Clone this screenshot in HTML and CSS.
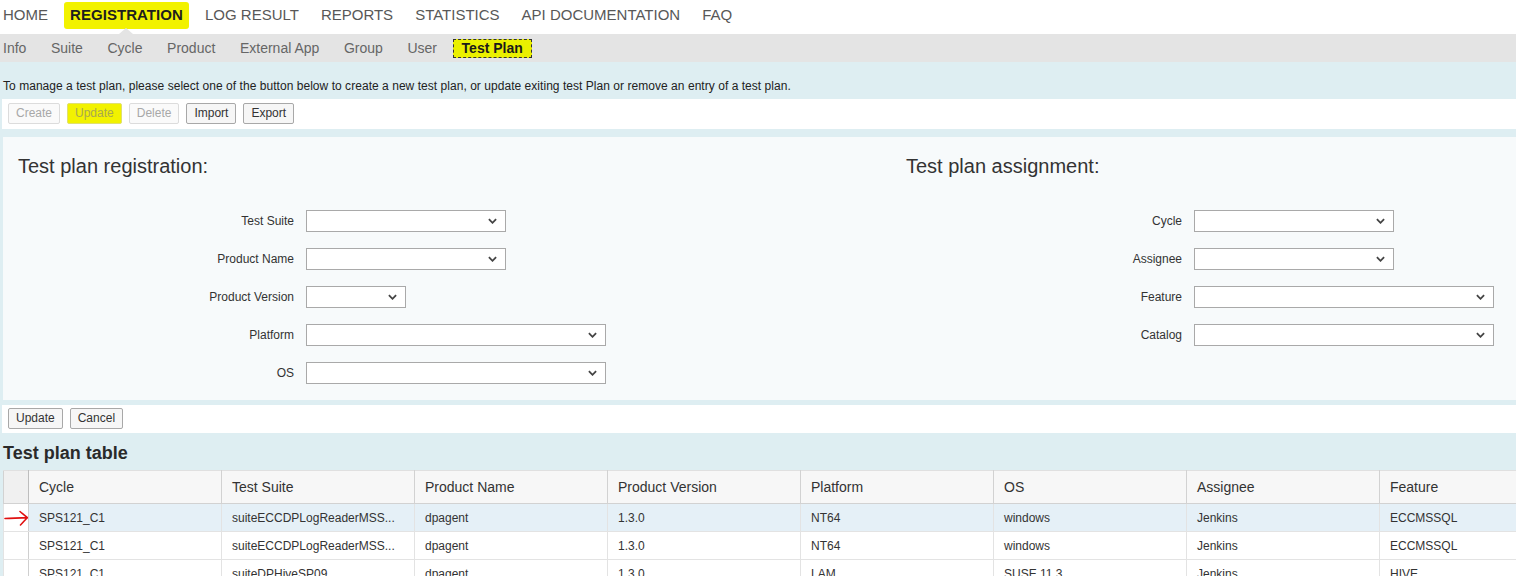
FILE: index.html
```html
<!DOCTYPE html>
<html>
<head>
<meta charset="utf-8">
<link rel="stylesheet" href="styles.css">
</head>
<body>
<nav class="topnav">
  <a class="tn">HOME</a>
  <a class="tn active"><span class="hl">REGISTRATION</span></a>
  <a class="tn">LOG RESULT</a>
  <a class="tn">REPORTS</a>
  <a class="tn">STATISTICS</a>
  <a class="tn">API DOCUMENTATION</a>
  <a class="tn">FAQ</a>
</nav>
<nav class="subnav">
  <a class="sn">Info</a>
  <a class="sn">Suite</a>
  <a class="sn">Cycle</a>
  <a class="sn">Product</a>
  <a class="sn">External App</a>
  <a class="sn">Group</a>
  <a class="sn">User</a>
  <a class="sn current">Test Plan</a>
</nav>
<main class="content">
  <p class="msg">To manage a test plan, please select one of the button below to create a new test plan, or update exiting test Plan or remove an entry of a test plan.</p>
  <div class="toolbar top">
    <button class="btn" disabled>Create</button>
    <button class="btn marked" disabled>Update</button>
    <button class="btn" disabled>Delete</button>
    <button class="btn">Import</button>
    <button class="btn">Export</button>
  </div>
  <section class="panel">
    <div class="col left">
      <h2 class="ptitle">Test plan registration:</h2>
      <div class="form">
        <label class="lbl">Test Suite</label><div class="sel w200"><svg class="chev" viewBox="0 0 10 6"><path d="M1 1 L5 5 L9 1"/></svg></div>
        <label class="lbl">Product Name</label><div class="sel w200"><svg class="chev" viewBox="0 0 10 6"><path d="M1 1 L5 5 L9 1"/></svg></div>
        <label class="lbl">Product Version</label><div class="sel w100"><svg class="chev" viewBox="0 0 10 6"><path d="M1 1 L5 5 L9 1"/></svg></div>
        <label class="lbl">Platform</label><div class="sel w300"><svg class="chev" viewBox="0 0 10 6"><path d="M1 1 L5 5 L9 1"/></svg></div>
        <label class="lbl">OS</label><div class="sel w300"><svg class="chev" viewBox="0 0 10 6"><path d="M1 1 L5 5 L9 1"/></svg></div>
      </div>
    </div>
    <div class="col right">
      <h2 class="ptitle">Test plan assignment:</h2>
      <div class="form">
        <label class="lbl">Cycle</label><div class="sel w200"><svg class="chev" viewBox="0 0 10 6"><path d="M1 1 L5 5 L9 1"/></svg></div>
        <label class="lbl">Assignee</label><div class="sel w200"><svg class="chev" viewBox="0 0 10 6"><path d="M1 1 L5 5 L9 1"/></svg></div>
        <label class="lbl">Feature</label><div class="sel w300"><svg class="chev" viewBox="0 0 10 6"><path d="M1 1 L5 5 L9 1"/></svg></div>
        <label class="lbl">Catalog</label><div class="sel w300"><svg class="chev" viewBox="0 0 10 6"><path d="M1 1 L5 5 L9 1"/></svg></div>
      </div>
    </div>
  </section>
  <div class="toolbar bottom">
    <button class="btn">Update</button>
    <button class="btn">Cancel</button>
  </div>
  <h3 class="ttitle">Test plan table</h3>
  <div class="tablewrap">
    <table class="grid">
      <colgroup>
        <col class="c-sel"><col class="c"><col class="c"><col class="c"><col class="c"><col class="c"><col class="c"><col class="c"><col class="c">
      </colgroup>
      <thead>
        <tr><th class="selcol"></th><th>Cycle</th><th>Test Suite</th><th>Product Name</th><th>Product Version</th><th>Platform</th><th>OS</th><th>Assignee</th><th>Feature</th></tr>
      </thead>
      <tbody>
        <tr class="selected">
          <td class="selcol"><svg class="arrow" viewBox="0 0 25 16"><path d="M1 8.5 C8 8 15 8.2 23 7.6 M16 1.5 C19 4 21 6 23.5 7.6 C21 10 19 12.5 16.5 15"/></svg></td>
          <td>SPS121_C1</td><td>suiteECCDPLogReaderMSS...</td><td>dpagent</td><td>1.3.0</td><td>NT64</td><td>windows</td><td>Jenkins</td><td>ECCMSSQL</td>
        </tr>
        <tr>
          <td class="selcol"></td>
          <td>SPS121_C1</td><td>suiteECCDPLogReaderMSS...</td><td>dpagent</td><td>1.3.0</td><td>NT64</td><td>windows</td><td>Jenkins</td><td>ECCMSSQL</td>
        </tr>
        <tr>
          <td class="selcol"></td>
          <td>SPS121_C1</td><td>suiteDPHiveSP09</td><td>dpagent</td><td>1.3.0</td><td>LAM</td><td>SUSE 11.3</td><td>Jenkins</td><td>HIVE</td>
        </tr>
      </tbody>
    </table>
  </div>
</main>
</body>
</html>
```
FILE: styles.css
```css
html, body {
  margin: 0;
  padding: 0;
  overflow: hidden;
  height: 576px;
}
body {
  font-family: "Liberation Sans", Arial, sans-serif;
  color: #333;
  background: #deeef2;
  width: 1516px;
}
.topnav {
  height: 34px;
  background: #fff;
  display: flex;
  align-items: center;
  gap: 22px;
  padding-left: 3px;
  padding-bottom: 4px;
  box-sizing: border-box;
}
.tn {
  font-size: 15px;
  color: #585858;
  line-height: 18px;
  position: relative;
}
.tn.active {
  font-weight: bold;
  font-size: 15px;
  letter-spacing: 0.06px;
  color: #1e1e1e;
}
.hl {
  background: #f2f200;
  padding: 4px 6px 6px;
  margin: 0 -6px;
  border-radius: 3px;
}
.tn.active::after {
  content: "";
  position: absolute;
  left: 50%;
  bottom: -10px;
  margin-left: -7px;
  border-left: 7px solid transparent;
  border-right: 7px solid transparent;
  border-bottom: 6px solid #e4e4e4;
}
.subnav {
  height: 28px;
  background: #e4e4e4;
  display: flex;
  align-items: center;
  gap: 24.6px;
  padding-left: 3px;
}
.sn {
  font-size: 14px;
  color: #666;
  line-height: 17px;
}
.sn.current {
  font-weight: bold;
  color: #1a1a1a;
  background: #eaf000;
  border: 1px dashed #333;
  padding: 0 8px;
  margin-left: -9px;
}
.content {
  display: flex;
  flex-direction: column;
}
.msg {
  margin: 0;
  font-size: 12px;
  line-height: 14px;
  color: #222;
  padding: 17px 3px 6px;
  letter-spacing: 0.04px;
}
.toolbar {
  background: #fff;
  margin-left: 2px;
  display: flex;
  gap: 7px;
  padding: 4px 6px 5px;
}
.toolbar.bottom {
  margin-top: 5px;
  padding: 3px 6px 4px;
}
.btn {
  font-family: "Liberation Sans", Arial, sans-serif;
  font-size: 12px;
  height: 21px;
  padding: 0 7px;
  color: #333;
  background: #f6f6f6;
  border: 1px solid #a8a8a8;
  border-radius: 2px;
  line-height: 19px;
}
.btn:disabled {
  color: #a8a8a8;
  border-color: #dcdcdc;
  background: #fafafa;
}
.btn.marked {
  background: #f2f200;
  color: #a8a850;
  border-color: #e0e070;
}
.panel {
  margin-top: 8px;
  margin-left: 3px;
  background: #f7fafb;
  display: flex;
  padding: 17px 0 16px;
}
.col {
  padding-left: 15px;
  box-sizing: border-box;
}
.col.left {
  width: 888px;
}
.col.right {
  flex: 1;
}
.ptitle {
  margin: 0 0 32px;
  font-weight: normal;
  font-size: 20px;
  line-height: 24px;
  color: #333;
}
.form {
  display: grid;
  grid-template-columns: 276px auto;
  column-gap: 12px;
  row-gap: 16px;
  align-items: center;
  justify-items: start;
}
.lbl {
  justify-self: end;
  font-size: 12px;
  color: #333;
}
.sel {
  height: 22px;
  box-sizing: border-box;
  border: 1px solid #a9a9a9;
  background: #fff;
  display: flex;
  align-items: center;
  justify-content: flex-end;
  padding-right: 8px;
}
.w100 { width: 100px; }
.w200 { width: 200px; }
.w300 { width: 300px; }
.chev {
  width: 9px;
  height: 6px;
  fill: none;
  stroke: #444;
  stroke-width: 2;
}
.ttitle {
  margin: 0;
  font-size: 18px;
  font-weight: bold;
  line-height: 22px;
  padding: 9px 3px 6px;
  color: #2a2a2a;
}
.tablewrap {
  margin-left: 3px;
  overflow: hidden;
}
.grid {
  border-collapse: collapse;
  table-layout: fixed;
  width: 1569px;
  font-size: 12px;
}
.c-sel { width: 25px; }
.c { width: 193px; }
.grid th {
  height: 33px;
  box-sizing: border-box;
  text-align: left;
  font-weight: normal;
  font-size: 14px;
  color: #333;
  background: #f7f7f7;
  border: 1px solid #d2d2d2;
  border-top: 1px solid #e0e0e0;
  padding: 0 10px;
}
.grid th.selcol {
  background: #f0f0f0;
  border-right: 1px solid #bdbdbd;
}
.grid td {
  height: 28px;
  box-sizing: border-box;
  padding: 0 10px;
  color: #333;
  background: #fff;
  border: 1px solid #e3e3e3;
  white-space: nowrap;
  overflow: hidden;
}
.grid tr.selected td {
  background: #e5f0f7;
}
.grid td.selcol,
.grid tr.selected td.selcol {
  background: #fff;
  padding: 0;
  border-right: 1px solid #cfcfcf;
  position: relative;
}
.arrow {
  position: absolute;
  left: 0;
  top: 6px;
  width: 25px;
  height: 16px;
  fill: none;
  stroke: #e01010;
  stroke-width: 1.6;
  stroke-linecap: round;
}
```
